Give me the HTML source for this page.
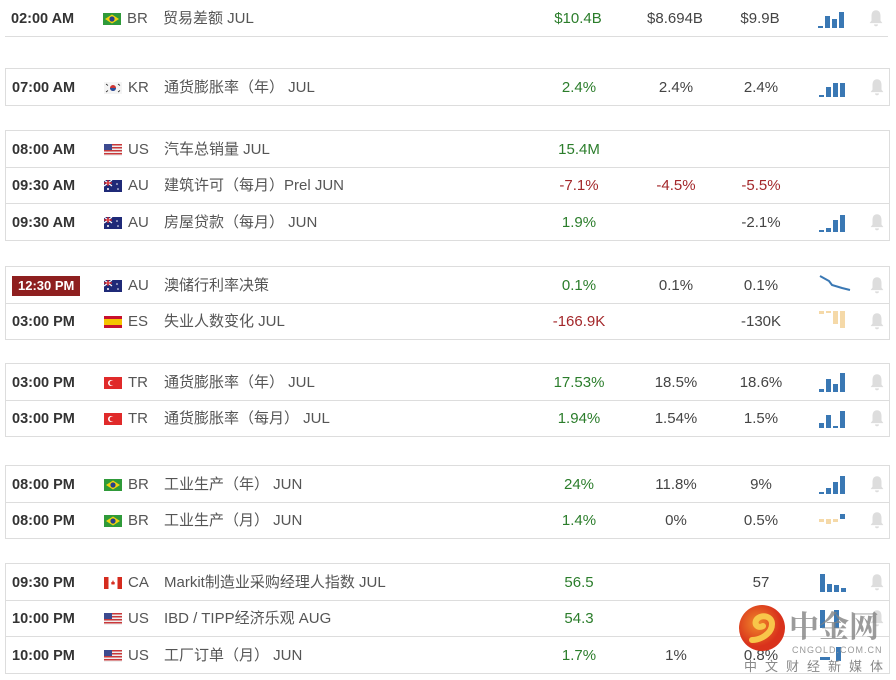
<!DOCTYPE html>
<html><head><meta charset="utf-8"><style>
body{margin:0;width:896px;height:680px;background:#fff;position:relative;overflow:hidden;font-family:"Liberation Sans","Noto Sans CJK SC",sans-serif;}
.r{position:absolute;left:5px;width:883px;height:36px;border-bottom:1px solid #ddd;}
.g{border-left:1px solid #ddd;border-right:1px solid #ddd}
.r span{position:absolute;top:1px;line-height:36px;font-size:15px;color:#555;white-space:nowrap}
.t{left:6px;font-weight:bold;color:#333!important;font-size:14.5px!important}
.f{position:absolute;left:98px;top:13px;width:18px;height:12px}
.c{left:122px}
.e{left:158px}
.a{left:520px;width:106px;text-align:center}
.p{left:620px;width:100px;text-align:center;color:#444!important}
.v{left:705px;width:100px;text-align:center;color:#444!important}
.gr{color:#2b7d2b!important}.rd{color:#a3272a!important}
.ch{position:absolute;left:808px;top:6px}
.bell{position:absolute;left:862px;top:9px;width:18px;height:18px}
.top{border-top:1px solid #ddd}
.badge{background:#8e1f1f;color:#fff!important;font-size:13px!important;line-height:20px!important;top:9px!important;padding:0 6px;font-weight:bold}
</style></head><body>
<svg width="0" height="0" style="position:absolute"><defs>
<symbol id="bl" viewBox="0 0 14 14"><path d="M7 1C4.5 1 3.5 3 3.5 5.5V9L2 11H12L10.5 9V5.5C10.5 3 9.5 1 7 1Z M5.5 12A1.5 1.5 0 0 0 8.5 12Z" fill="#ddd"/></symbol>
<symbol id="br" viewBox="0 0 18 12"><rect width="18" height="12" fill="#2f9a3a"/><path d="M9 1.5L16 6L9 10.5L2 6Z" fill="#f2d20f"/><circle cx="9" cy="6" r="2.6" fill="#27408b"/></symbol>
<symbol id="us" viewBox="0 0 18 12"><rect width="18" height="12" fill="#eee"/><g fill="#c9383a"><rect y="0" width="18" height="1.5"/><rect y="3" width="18" height="1.5"/><rect y="6" width="18" height="1.5"/><rect y="9" width="18" height="1.5"/></g><rect width="8" height="6" fill="#3c4a8f"/></symbol>
<symbol id="au" viewBox="0 0 18 12"><rect width="18" height="12" fill="#1f2a78"/><path d="M0 0L8 6M8 0L0 6" stroke="#fff" stroke-width="1.2"/><path d="M4 0V6M0 3H8" stroke="#d22" stroke-width="1.2"/><circle cx="13" cy="4" r=".8" fill="#fff"/><circle cx="14" cy="9" r=".8" fill="#fff"/><circle cx="4" cy="9" r="1" fill="#fff"/></symbol>
<symbol id="kr" viewBox="0 0 18 12"><rect width="18" height="12" fill="#f4f4f4"/><circle cx="9" cy="6" r="3" fill="#c33"/><path d="M6 6A3 3 0 0 0 12 6Z" fill="#2452a0"/><g stroke="#333" stroke-width=".8"><path d="M2 2L4 3.5M14 2L16 3.5M2 10L4 8.5M14 10L16 8.5"/></g></symbol>
<symbol id="es" viewBox="0 0 18 12"><rect width="18" height="12" fill="#c8102e"/><rect y="3" width="18" height="6" fill="#f5c400"/></symbol>
<symbol id="tr" viewBox="0 0 18 12"><rect width="18" height="12" fill="#e02a2a"/><circle cx="7" cy="6" r="3" fill="#fff"/><circle cx="8" cy="6" r="2.4" fill="#e02a2a"/></symbol>
<symbol id="ca" viewBox="0 0 18 12"><rect width="18" height="12" fill="#fff"/><rect width="4.5" height="12" fill="#d52b1e"/><rect x="13.5" width="4.5" height="12" fill="#d52b1e"/><path d="M9 3L10 5.5L11 5L10.5 7.5H7.5L7 5L8 5.5Z" fill="#d52b1e"/></symbol>
</defs></svg>

<div class="r" style="top:0"><span class="t">02:00 AM</span><svg class="f"><use href="#br"/></svg><span class="c">BR</span><span class="e">贸易差额 JUL</span><span class="a gr">$10.4B</span><span class="p">$8.694B</span><span class="v">$9.9B</span><svg class="ch" width="40" height="24"><g fill="#3a78b4"><rect x="5" y="20" width="5" height="2"/><rect x="12" y="10" width="5" height="12"/><rect x="19" y="13" width="5" height="9"/><rect x="26" y="6" width="5" height="16"/></g></svg><svg class="bell"><use href="#bl"/></svg></div>

<div class="r g top" style="top:68px"><span class="t">07:00 AM</span><svg class="f"><use href="#kr"/></svg><span class="c">KR</span><span class="e">通货膨胀率（年） JUL</span><span class="a gr">2.4%</span><span class="p">2.4%</span><span class="v">2.4%</span><svg class="ch" width="40" height="24"><g fill="#3a78b4"><rect x="5" y="20" width="5" height="2"/><rect x="12" y="12" width="5" height="10"/><rect x="19" y="8" width="5" height="14"/><rect x="26" y="8" width="5" height="14"/></g></svg><svg class="bell"><use href="#bl"/></svg></div>

<div class="r g top" style="top:130px"><span class="t">08:00 AM</span><svg class="f"><use href="#us"/></svg><span class="c">US</span><span class="e">汽车总销量 JUL</span><span class="a gr">15.4M</span></div>
<div class="r g" style="top:167px"><span class="t">09:30 AM</span><svg class="f"><use href="#au"/></svg><span class="c">AU</span><span class="e">建筑许可（每月）Prel JUN</span><span class="a rd">-7.1%</span><span class="p" style="color:#a3272a!important">-4.5%</span><span class="v" style="color:#a3272a!important">-5.5%</span></div>
<div class="r g" style="top:204px"><span class="t">09:30 AM</span><svg class="f"><use href="#au"/></svg><span class="c">AU</span><span class="e">房屋贷款（每月） JUN</span><span class="a gr">1.9%</span><span class="v">-2.1%</span><svg class="ch" width="40" height="24"><g fill="#3a78b4"><rect x="5" y="20" width="5" height="2"/><rect x="12" y="18" width="5" height="4"/><rect x="19" y="10" width="5" height="12"/><rect x="26" y="5" width="5" height="17"/></g></svg><svg class="bell"><use href="#bl"/></svg></div>

<div class="r g top" style="top:266px"><span class="t badge">12:30 PM</span><svg class="f"><use href="#au"/></svg><span class="c">AU</span><span class="e">澳储行利率决策</span><span class="a gr">0.1%</span><span class="p">0.1%</span><span class="v">0.1%</span><svg class="ch" width="40" height="24"><path d="M6 3L15 8L18 12L28 15L36 17" fill="none" stroke="#3a78b4" stroke-width="2"/></svg><svg class="bell"><use href="#bl"/></svg></div>
<div class="r g" style="top:303px"><span class="t">03:00 PM</span><svg class="f"><use href="#es"/></svg><span class="c">ES</span><span class="e">失业人数变化 JUL</span><span class="a rd">-166.9K</span><span class="v">-130K</span><svg class="ch" width="40" height="24"><g fill="#f5d9a8"><rect x="5" y="2" width="5" height="3"/><rect x="12" y="2" width="5" height="2"/><rect x="19" y="2" width="5" height="13"/><rect x="26" y="2" width="5" height="17"/></g></svg><svg class="bell"><use href="#bl"/></svg></div>

<div class="r g top" style="top:363px"><span class="t">03:00 PM</span><svg class="f"><use href="#tr"/></svg><span class="c">TR</span><span class="e">通货膨胀率（年） JUL</span><span class="a gr">17.53%</span><span class="p">18.5%</span><span class="v">18.6%</span><svg class="ch" width="40" height="24"><g fill="#3a78b4"><rect x="5" y="19" width="5" height="3"/><rect x="12" y="9" width="5" height="13"/><rect x="19" y="14" width="5" height="8"/><rect x="26" y="3" width="5" height="19"/></g></svg><svg class="bell"><use href="#bl"/></svg></div>
<div class="r g" style="top:400px"><span class="t">03:00 PM</span><svg class="f"><use href="#tr"/></svg><span class="c">TR</span><span class="e">通货膨胀率（每月） JUL</span><span class="a gr">1.94%</span><span class="p">1.54%</span><span class="v">1.5%</span><svg class="ch" width="40" height="24"><g fill="#3a78b4"><rect x="5" y="17" width="5" height="5"/><rect x="12" y="9" width="5" height="13"/><rect x="19" y="20" width="5" height="2"/><rect x="26" y="5" width="5" height="17"/></g></svg><svg class="bell"><use href="#bl"/></svg></div>

<div class="r g top" style="top:465px"><span class="t">08:00 PM</span><svg class="f"><use href="#br"/></svg><span class="c">BR</span><span class="e">工业生产（年） JUN</span><span class="a gr">24%</span><span class="p">11.8%</span><span class="v">9%</span><svg class="ch" width="40" height="24"><g fill="#3a78b4"><rect x="5" y="20" width="5" height="2"/><rect x="12" y="16" width="5" height="6"/><rect x="19" y="10" width="5" height="12"/><rect x="26" y="4" width="5" height="18"/></g></svg><svg class="bell"><use href="#bl"/></svg></div>
<div class="r g" style="top:502px"><span class="t">08:00 PM</span><svg class="f"><use href="#br"/></svg><span class="c">BR</span><span class="e">工业生产（月） JUN</span><span class="a gr">1.4%</span><span class="p">0%</span><span class="v">0.5%</span><svg class="ch" width="40" height="24"><g fill="#f5d9a8"><rect x="5" y="11" width="5" height="3"/><rect x="12" y="11" width="5" height="5"/><rect x="19" y="11" width="5" height="3"/></g><rect x="26" y="6" width="5" height="5" fill="#3a78b4"/></svg><svg class="bell"><use href="#bl"/></svg></div>

<div class="r g top" style="top:563px"><span class="t">09:30 PM</span><svg class="f"><use href="#ca"/></svg><span class="c">CA</span><span class="e">Markit制造业采购经理人指数 JUL</span><span class="a gr">56.5</span><span class="v">57</span><svg class="ch" width="40" height="24"><g fill="#3a78b4"><rect x="6" y="4" width="5" height="18"/><rect x="13" y="14" width="5" height="8"/><rect x="20" y="15" width="5" height="7"/><rect x="27" y="18" width="5" height="4"/></g></svg><svg class="bell"><use href="#bl"/></svg></div>
<div class="r g" style="top:600px"><span class="t">10:00 PM</span><svg class="f"><use href="#us"/></svg><span class="c">US</span><span class="e">IBD / TIPP经济乐观 AUG</span><span class="a gr">54.3</span><svg class="ch" width="40" height="24"><g fill="#3a78b4"><rect x="6" y="4" width="5" height="18"/><rect x="20" y="4" width="5" height="18"/></g></svg><svg class="bell"><use href="#bl"/></svg></div>
<div class="r g" style="top:637px"><span class="t">10:00 PM</span><svg class="f"><use href="#us"/></svg><span class="c">US</span><span class="e">工厂订单（月） JUN</span><span class="a gr">1.7%</span><span class="p">1%</span><span class="v">0.8%</span><svg class="ch" width="40" height="24"><g fill="#3a78b4"><rect x="6" y="14" width="10" height="3"/><rect x="22" y="4" width="5" height="14"/></g></svg></div>

<svg style="position:absolute;left:738px;top:604px" width="50" height="50"><defs><radialGradient id="lg" cx="40%" cy="40%"><stop offset="0" stop-color="#f08a2a"/><stop offset="1" stop-color="#d9321c"/></radialGradient></defs><circle cx="24" cy="24" r="23" fill="url(#lg)"/><path d="M14 36C22 36 34 30 34 20C34 12 24 10 19 15C15 20 20 25 25 22" fill="none" stroke="#f8c64a" stroke-width="6" stroke-linecap="round"/></svg>
<div style="position:absolute;left:789px;top:606px;font-size:30px;font-weight:bold;color:rgba(130,130,130,.8);font-family:'Noto Serif CJK SC','Noto Sans CJK SC',serif;line-height:36px;white-space:nowrap">中金网</div>
<div style="position:absolute;left:792px;top:645px;font-size:9px;color:#999;letter-spacing:1px;white-space:nowrap">CNGOLD.COM.CN</div>
<div style="position:absolute;left:744px;top:656px;font-size:13px;color:#888;letter-spacing:8px;font-family:'Noto Sans CJK SC',sans-serif;white-space:nowrap">中文财经新媒体</div>
</body></html>
